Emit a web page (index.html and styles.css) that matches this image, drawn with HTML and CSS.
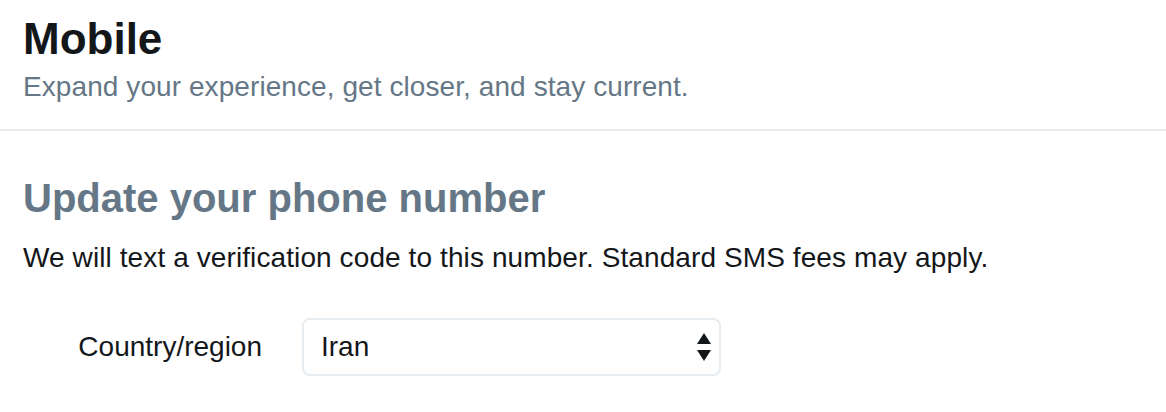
FILE: index.html
```html
<!DOCTYPE html>
<html lang="en">
	<head>
		<meta charset="utf-8">
		<title>Mobile</title>
		<link rel="stylesheet" href="styles.css">
	</head>
	<body>
		<div class="header">
			<h1 class="title">Mobile</h1>
			<p class="subtitle">Expand your experience, get closer, and stay current.</p>
		</div>
		<div class="content">
			<h2 class="section-title">Update your phone number</h2>
			<p class="section-text">We will text a verification code to this number. Standard SMS fees may apply.</p>
			<div class="form-row">
				<label class="form-label" for="country">Country/region</label>
				<div class="select" id="country">
					<span class="select-value">Iran</span>
					<svg class="select-arrows" width="14" height="28" viewBox="0 0 14 28">
						<path d="M7 0 L14 11 L0 11 Z" fill="#14171a"/>
						<path d="M0 17 L14 17 L7 28 Z" fill="#14171a"/>
					</svg>
				</div>
			</div>
		</div>
	</body>
</html>
```

FILE: styles.css
```css
body {
	margin: 0;
	background: #fff;
	font-family: "Liberation Sans", Arial, sans-serif;
	color: #14171a;
}

.header {
	padding: 13px 23px 24px;
	border-bottom: 2px solid #e6ecf0;
}

.title {
	margin: 0;
	font-size: 44px;
	line-height: 52px;
	font-weight: bold;
	color: #14171a;
}

.subtitle {
	margin: 4px 0 0;
	font-size: 28px;
	line-height: 36px;
	letter-spacing: 0.08px;
	color: #657786;
}

.content {
	padding: 43px 23px 0;
}

.section-title {
	margin: 0;
	font-size: 40px;
	line-height: 48px;
	font-weight: bold;
	color: #657786;
}

.section-text {
	margin: 18px 0 0;
	font-size: 28px;
	line-height: 36px;
	letter-spacing: 0.1px;
}

.form-row {
	display: flex;
	align-items: center;
	gap: 40px;
	margin-top: 42px;
}

.form-label {
	width: 239px;
	text-align: right;
	font-size: 28px;
	line-height: 36px;
}

.select {
	box-sizing: border-box;
	width: 419px;
	height: 58px;
	border: 2px solid #e6ecf0;
	border-radius: 8px;
	padding: 0 8px 0 17px;
	display: flex;
	align-items: center;
	justify-content: space-between;
	font-size: 28px;
}

.select-arrows {
	display: block;
}
```
